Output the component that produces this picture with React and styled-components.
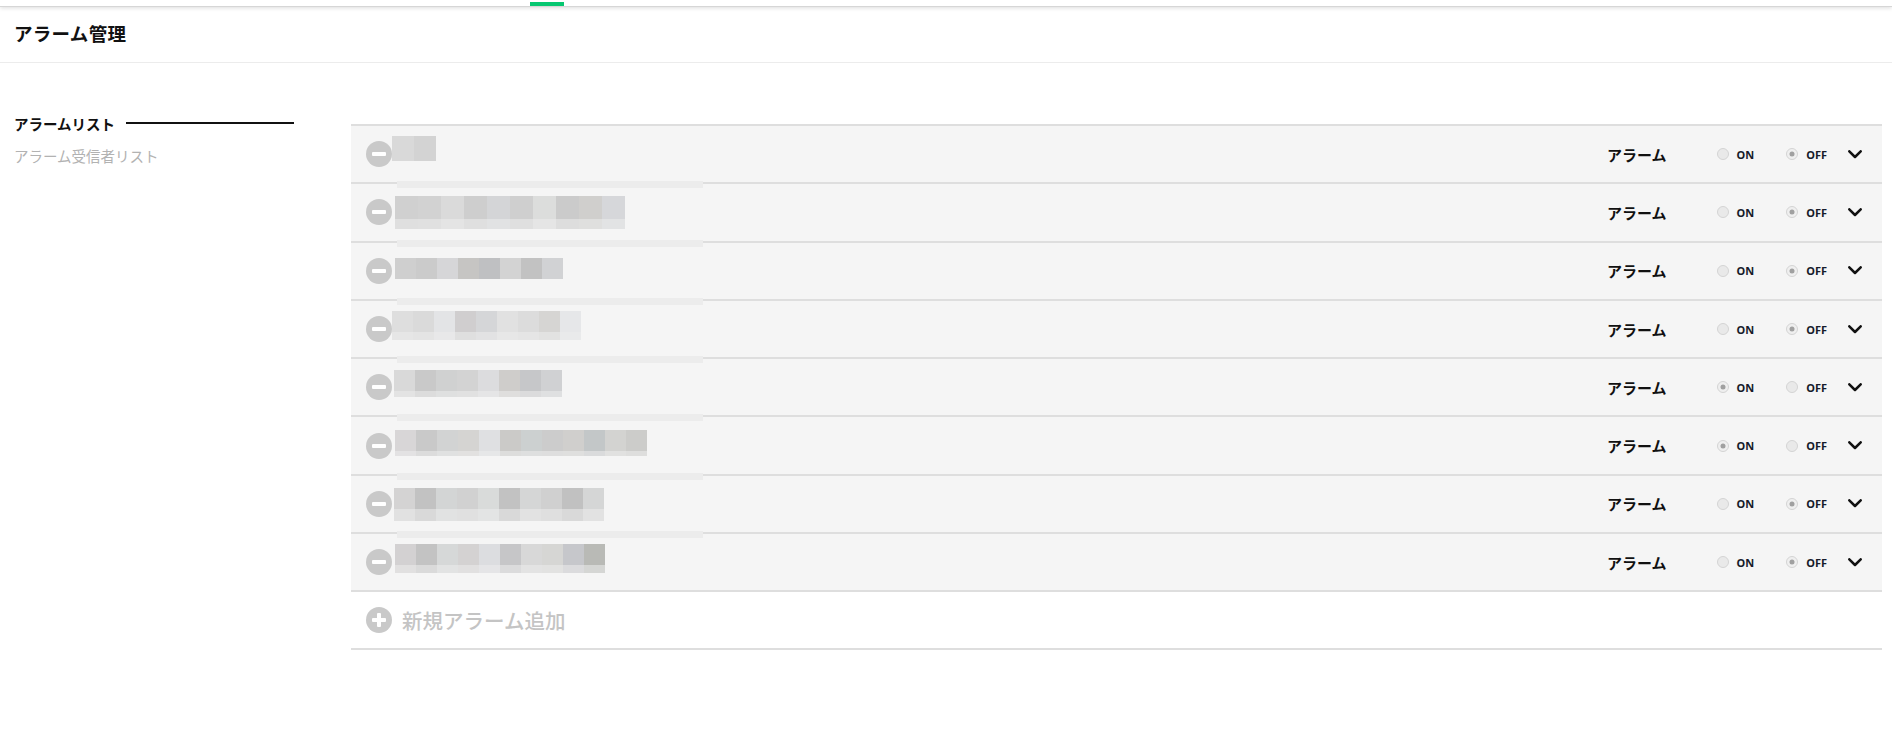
import styled, { createGlobalStyle } from "styled-components";

const GlobalStyle = createGlobalStyle`
  html, body {
    margin: 0;
    padding: 0;
    background: #fff;
  }
  body {
    font-family: "Noto Sans", "Noto Sans CJK JP", sans-serif;
    color: #111;
  }
`;

// pixelated (censored) names, one per alarm
const alarms = [
  { top: 10, left: 0, w: 22, h: 25, lh: 0, on: false,
    cells: ["#d9d9d9", "#d3d3d3"] },
  { top: 12, left: 3, w: 23, h: 23, lh: 10, on: false,
    cells: ["#d0d0d0", "#d2d2d2", "#dadada", "#cecece", "#d4d5d7", "#cfcfcf", "#dcdddc", "#cbcbcb", "#d0cfcd", "#d6d7da"] },
  { top: 15, left: 3, w: 21, h: 21, lh: 0, on: false,
    cells: ["#cfcfcf", "#cbcbcb", "#d6d6d8", "#c6c5c3", "#bfc0c2", "#d3d3d3", "#c2c2c2", "#d1d2d4"] },
  { top: 10, left: 0, w: 21, h: 21, lh: 8, on: false,
    cells: ["#dedede", "#dadada", "#e3e4e6", "#d0cecf", "#d5d6d8", "#e1e1e1", "#dcdcdc", "#d6d5d3", "#e6e7e9"] },
  { top: 11, left: 2, w: 21, h: 21, lh: 6, on: true,
    cells: ["#d9d9d9", "#c9c9c9", "#d0d1d1", "#d3d3d3", "#dcdcde", "#cfcdcb", "#c6c7c9", "#d0d1d3"] },
  { top: 13, left: 3, w: 21, h: 21, lh: 5, on: true,
    cells: ["#d8d6d7", "#c9c9c9", "#d2d3d3", "#d5d4d2", "#dfe0e2", "#cbcac8", "#ccd0d0", "#cccccc", "#d0cfcd", "#c3c7c8", "#d3d3d1", "#ccccca"] },
  { top: 12, left: 2, w: 21, h: 21, lh: 12, on: false,
    cells: ["#d4d3d3", "#c2c2c2", "#d3d5d5", "#d1d1d1", "#d9dbda", "#c2c2c2", "#d5d6d6", "#d0d0d0", "#c1c1c1", "#d5d6d6"] },
  { top: 10, left: 3, w: 21, h: 21, lh: 8, on: false,
    cells: ["#d3d1d2", "#c3c3c3", "#d6d8d8", "#d4d2d2", "#dcdde0", "#c6c6c8", "#d8d8d8", "#d6d6d4", "#c6c7cb", "#b9bab6"] },
];

function lighten(hex) {
  const n = parseInt(hex.slice(1), 16);
  const mix = (c) => Math.round(c + (236 - c) * 0.55);
  const r = mix((n >> 16) & 255);
  const g = mix((n >> 8) & 255);
  const b = mix(n & 255);
  return `rgb(${r}, ${g}, ${b})`;
}

export default function App() {
  return (
    <>
      <GlobalStyle />
      <TopBar>
        <ActiveTab />
      </TopBar>
      <Header>
        <Title>アラーム管理</Title>
      </Header>
      <Body>
        <Sidebar>
          <SideItem $active>
            アラームリスト
            <SideLine />
          </SideItem>
          <SideItem>アラーム受信者リスト</SideItem>
        </Sidebar>
        <Main>
          <List>
            {alarms.map((a, i) => (
              <Row key={i} $band={i > 0}>
                <RoundIcon>
                  <Bar />
                </RoundIcon>
                <Mosaic $top={a.top} $left={a.left}>
                  <Cells>
                    {a.cells.map((c, j) => (
                      <Cell key={j} $w={a.w} $h={a.h} style={{ background: c }} />
                    ))}
                  </Cells>
                  {a.lh > 0 && (
                    <Cells>
                      {a.cells.map((c, j) => (
                        <Cell key={j} $w={a.w} $h={a.lh} style={{ background: lighten(c) }} />
                      ))}
                    </Cells>
                  )}
                </Mosaic>
                <Spacer />
                <AlarmLabel>アラーム</AlarmLabel>
                <Radio>
                  <Dot $checked={a.on} />
                  ON
                </Radio>
                <Radio $off>
                  <Dot $checked={!a.on} />
                  OFF
                </Radio>
                <Chevron viewBox="0 0 14 9">
                  <polyline points="1.3,1.3 7,7 12.7,1.3" />
                </Chevron>
              </Row>
            ))}
          </List>
          <AddRow>
            <RoundIcon>
              <Bar />
              <Bar $vertical />
            </RoundIcon>
            <AddText>新規アラーム追加</AddText>
          </AddRow>
        </Main>
      </Body>
    </>
  );
}

const TopBar = styled.div`
  position: relative;
  height: 6px;
  background: #fff;
  border-bottom: 1px solid #d6d6d6;
  box-shadow: 0 1px 4px rgba(0, 0, 0, 0.14);
`;

const ActiveTab = styled.div`
  position: absolute;
  left: 530px;
  top: 2px;
  width: 34px;
  height: 4px;
  background: #06c770;
`;

const Header = styled.div`
  box-sizing: border-box;
  height: 56px;
  display: flex;
  align-items: center;
  padding: 0 0 4px 14px;
  border-bottom: 1px solid #ececec;
`;

const Title = styled.h1`
  margin: 0;
  font-size: 18.5px;
  font-weight: 700;
  color: #111;
  letter-spacing: 0.3px;
`;

const Body = styled.div`
  display: grid;
  grid-template-columns: 280px 1fr;
  column-gap: 57px;
  padding: 0 10px 0 14px;
`;

const Sidebar = styled.nav`
  padding-top: 50px;
  display: flex;
  flex-direction: column;
  gap: 12px;
`;

const SideItem = styled.div`
  display: flex;
  align-items: center;
  height: 20px;
  font-size: 14.5px;
  font-weight: ${(p) => (p.$active ? 700 : 400)};
  color: ${(p) => (p.$active ? "#111" : "#b2b2b2")};
  white-space: nowrap;
`;

const SideLine = styled.span`
  flex: 1;
  height: 2px;
  margin-left: 11px;
  background: #111;
`;

const Main = styled.main`
  padding-top: 61px;
`;

const List = styled.div`
  border-top: 2px solid #dedede;
`;

const Row = styled.div`
  position: relative;
  display: flex;
  align-items: center;
  height: 56.3px;
  padding: 0 20px 0 15px;
  background: #f5f5f5;
  border-bottom: 2px solid #dedede;

  &::before {
    content: "";
    display: ${(p) => (p.$band ? "block" : "none")};
    position: absolute;
    left: 46px;
    top: -3px;
    width: 306px;
    height: 7px;
    background: #ececec;
  }
`;

const RoundIcon = styled.span`
  position: relative;
  flex: none;
  width: 26px;
  height: 26px;
  border-radius: 50%;
  background: #c9c9c9;
`;

const Bar = styled.span`
  position: absolute;
  left: 50%;
  top: 50%;
  width: ${(p) => (p.$vertical ? 4 : 14)}px;
  height: ${(p) => (p.$vertical ? 14 : 4)}px;
  border-radius: 1px;
  background: #fff;
  transform: translate(-50%, -50%);
`;

const Mosaic = styled.div`
  align-self: flex-start;
  display: flex;
  flex-direction: column;
  margin-top: ${(p) => p.$top}px;
  margin-left: ${(p) => p.$left}px;
`;

const Cells = styled.div`
  display: flex;
`;

const Cell = styled.span`
  width: ${(p) => p.$w}px;
  height: ${(p) => p.$h}px;
`;

const Spacer = styled.div`
  flex: 1;
`;

const AlarmLabel = styled.span`
  font-size: 15px;
  font-weight: 700;
  color: #111;
  margin-right: 50px;
`;

const Radio = styled.label`
  display: flex;
  align-items: center;
  gap: 8px;
  font-size: 11px;
  font-weight: 700;
  color: #161b2a;
  margin-right: ${(p) => (p.$off ? 21 : 32)}px;
`;

const Dot = styled.span`
  position: relative;
  width: 10px;
  height: 10px;
  border-radius: 50%;
  border: 1px solid #d4d4d4;
  background: ${(p) => (p.$checked ? "#efefef" : "#e9e9e9")};

  &::after {
    content: "";
    display: ${(p) => (p.$checked ? "block" : "none")};
    position: absolute;
    left: 50%;
    top: 50%;
    width: 5px;
    height: 5px;
    border-radius: 50%;
    background: #a0a0a0;
    transform: translate(-50%, -50%);
  }
`;

const Chevron = styled.svg`
  width: 14px;
  height: 9px;
  fill: none;
  stroke: #111;
  stroke-width: 2.5;
  stroke-linecap: round;
  stroke-linejoin: round;
`;

const AddRow = styled.div`
  display: flex;
  align-items: center;
  gap: 10px;
  height: 56px;
  padding-left: 15px;
  border-bottom: 2px solid #dedede;
`;

const AddText = styled.span`
  font-size: 20.5px;
  font-weight: 500;
  color: #c4c4c4;
`;
